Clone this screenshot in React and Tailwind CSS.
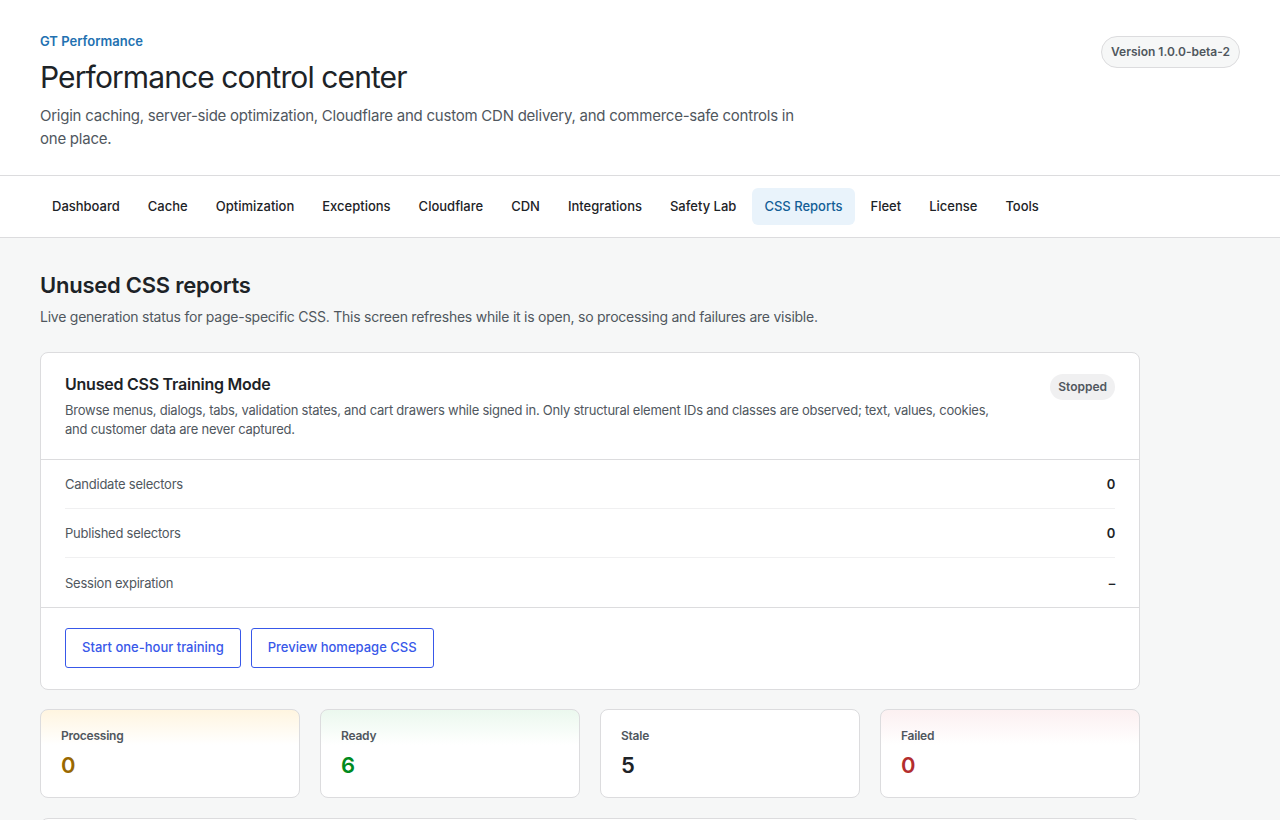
const tabs = [
  "Dashboard",
  "Cache",
  "Optimization",
  "Exceptions",
  "Cloudflare",
  "CDN",
  "Integrations",
  "Safety Lab",
  "CSS Reports",
  "Fleet",
  "License",
  "Tools",
];

const rows = [
  { label: "Candidate selectors", value: "0" },
  { label: "Published selectors", value: "0" },
  { label: "Session expiration", value: "–" },
];

const stats = [
  { label: "Processing", value: "0", tint: "from-[#fff5e0]", color: "text-[#996800]" },
  { label: "Ready", value: "6", tint: "from-[#ebf8ee]", color: "text-[#008a20]" },
  { label: "Stale", value: "5", tint: "from-white", color: "text-[#1d2327]" },
  { label: "Failed", value: "0", tint: "from-[#fcf0f1]", color: "text-[#b32d2e]" },
];

const App = () => {
  return (
    <div className="min-h-screen bg-[#f6f7f7] text-[#1d2327] tracking-[-0.015em] font-['Inter','Liberation_Sans',sans-serif]">
      {/* Header */}
      <header className="bg-white border-b border-[#dcdcde] px-10 pt-[33px] pb-[25px] flex items-start justify-between">
        <div>
          <p className="text-[13px] font-semibold text-[#2271b1] leading-4 tracking-normal">GT Performance</p>
          <h1 className="mt-[9px] text-[30px] font-normal leading-[38px] tracking-[-0.03em]">
            Performance control center
          </h1>
          <p className="mt-[8px] max-w-[760px] text-[15px] leading-[23px] text-[#50575e]">
            Origin caching, server-side optimization, Cloudflare and custom CDN delivery, and commerce-safe controls in one place.
          </p>
        </div>
        <span className="mt-[3px] rounded-full border border-[#dcdcde] bg-[#f6f7f7] px-[9px] py-[7px] text-[12px] font-semibold leading-4 tracking-normal text-[#50575e]">
          Version 1.0.0-beta-2
        </span>
      </header>

      {/* Tabs */}
      <nav className="bg-white border-b border-[#dcdcde] px-10 py-3 flex gap-1 tracking-normal">
        {tabs.map((t) => (
          <a
            key={t}
            className={
              "px-3 h-[37px] flex items-center rounded-md text-[13px] font-medium " +
              (t === "CSS Reports" ? "bg-[#e9f3fb] text-[#135e96]" : "text-[#1d2327]")
            }
          >
            {t}
          </a>
        ))}
      </nav>

      <main className="px-10 pt-[33px]">
        <h2 className="text-[22px] font-semibold leading-7">Unused CSS reports</h2>
        <p className="mt-[8px] text-[14px] leading-5 text-[#50575e]">
          Live generation status for page-specific CSS. This screen refreshes while it is open, so processing and failures are visible.
        </p>

        {/* Training card */}
        <section className="mt-[25px] w-[1100px] bg-white border border-[#dcdcde] rounded-lg">
          <div className="px-6 pt-[21px] pb-[20px] flex items-start justify-between gap-4">
            <div className="max-w-[935px]">
              <h3 className="text-[16px] font-semibold leading-5">Unused CSS Training Mode</h3>
              <p className="mt-[7px] text-[13px] leading-[19px] text-[#50575e]">
                Browse menus, dialogs, tabs, validation states, and cart drawers while signed in. Only structural element IDs and classes are observed; text, values, cookies, and customer data are never captured.
              </p>
            </div>
            <span className="shrink-0 rounded-full bg-[#f0f0f1] px-2 py-[5px] text-[12px] font-semibold leading-4 tracking-normal text-[#50575e]">
              Stopped
            </span>
          </div>

          <div className="border-t border-[#dcdcde] px-6">
            {rows.map((r, i) => (
              <div
                key={r.label}
                className={
                  "h-[49px] pt-[2px] flex items-center justify-between text-[13px] " +
                  (i < rows.length - 1 ? "border-b border-[#f0f0f1]" : "")
                }
              >
                <span className="text-[#50575e]">{r.label}</span>
                <span className="font-semibold">{r.value}</span>
              </div>
            ))}
          </div>

          <div className="border-t border-[#dcdcde] px-6 pt-5 pb-[21px] flex gap-[10px] tracking-normal">
            <button className="h-10 px-4 border border-[#3858e9] rounded-[3px] text-[13px] font-medium text-[#3858e9] bg-white">
              Start one-hour training
            </button>
            <button className="h-10 px-4 border border-[#3858e9] rounded-[3px] text-[13px] font-medium text-[#3858e9] bg-white">
              Preview homepage CSS
            </button>
          </div>
        </section>

        {/* Stats */}
        <div className="mt-[19px] w-[1100px] grid grid-cols-4 gap-5">
          {stats.map((s) => (
            <div
              key={s.label}
              className={"h-[89px] rounded-lg border border-[#dcdcde] bg-gradient-to-b to-white to-[40%] px-5 pt-[18px] " + s.tint}
            >
              <p className="text-[12px] font-semibold leading-4 text-[#50575e]">{s.label}</p>
              <p className={"mt-[7px] text-[22px] font-semibold leading-7 " + s.color}>{s.value}</p>
            </div>
          ))}
        </div>

        <div className="mt-5 w-[1100px] h-10 bg-white border border-[#dcdcde] rounded-lg" />
      </main>
    </div>
  );
};

export default App;
